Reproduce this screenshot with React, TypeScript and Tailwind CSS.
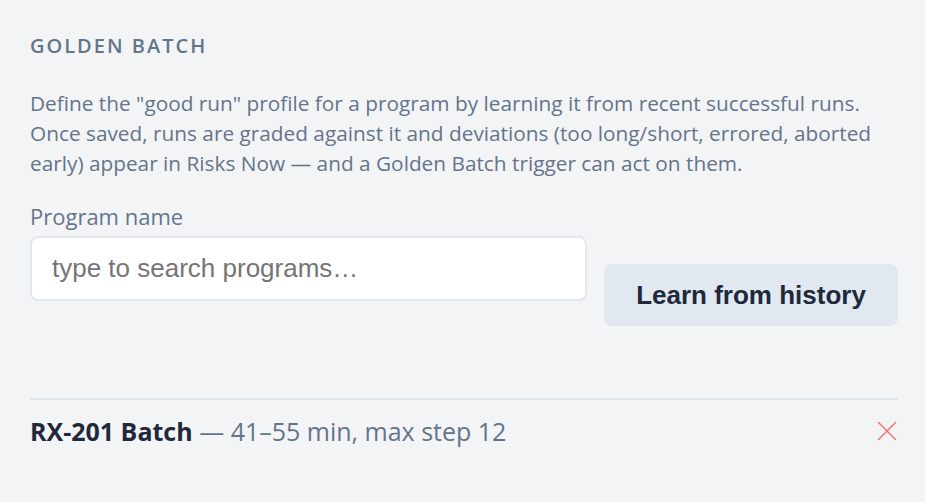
export default function App() {
  return (
    <div
      className="min-h-[502px] w-full bg-[#f3f4f6] pl-[30px] pr-[27px] pt-[31px] text-[#64748b]"
      style={{ fontFamily: '"Open Sans", sans-serif' }}
    >
      <h2 className="text-[20px] font-semibold uppercase leading-[30px] tracking-[0.1em] text-[#64748b]">
        Golden Batch
      </h2>
      <p className="mt-[27px] max-w-[868px] text-[20.8px] leading-[30px]">
        Define the "good run" profile for a program by learning it from recent successful runs.
        <br />
        Once saved, runs are graded against it and deviations (too long/short, errored, aborted
        <br />
        early) appear in Risks Now — and a Golden Batch trigger can act on them.
      </p>

      <div className="mt-[23px] flex items-end gap-[17px]">
        <div className="flex w-[557px] shrink-0 flex-col">
          <label className="text-[22px] leading-[30px]">Program name</label>
          <input
            className="mt-[5px] h-[65px] rounded-[8px] border-2 border-[#e2e8f0] bg-white px-[20px] text-[26px] text-[#1e293b] outline-none placeholder:text-[#757575]"
            style={{ fontFamily: '"Liberation Sans", Arial, sans-serif' }}
            placeholder="type to search programs…"
          />
        </div>
        <button
          className="mb-[-25px] h-[62px] w-[294px] shrink-0 rounded-[8px] bg-[#e2e8f0] text-[26px] font-bold text-[#1e293b]"
          style={{ fontFamily: '"Liberation Sans", Arial, sans-serif' }}
        >
          Learn from history
        </button>
      </div>

      <div className="mt-[97px] flex items-center justify-between border-t-2 border-[#e2e8f0] pt-[15px]">
        <div className="text-[25px] leading-[32px]">
          <span className="font-bold text-[#1e293b]">RX-201 Batch</span> — 41–55 min, max step 12
        </div>
        <svg width="20" height="20" viewBox="0 0 20 20" className="mr-[1px] text-[#f87171]">
          <path d="M1 1L19 19M19 1L1 19" stroke="currentColor" strokeWidth="1.5" />
        </svg>
      </div>
    </div>
  )
}
